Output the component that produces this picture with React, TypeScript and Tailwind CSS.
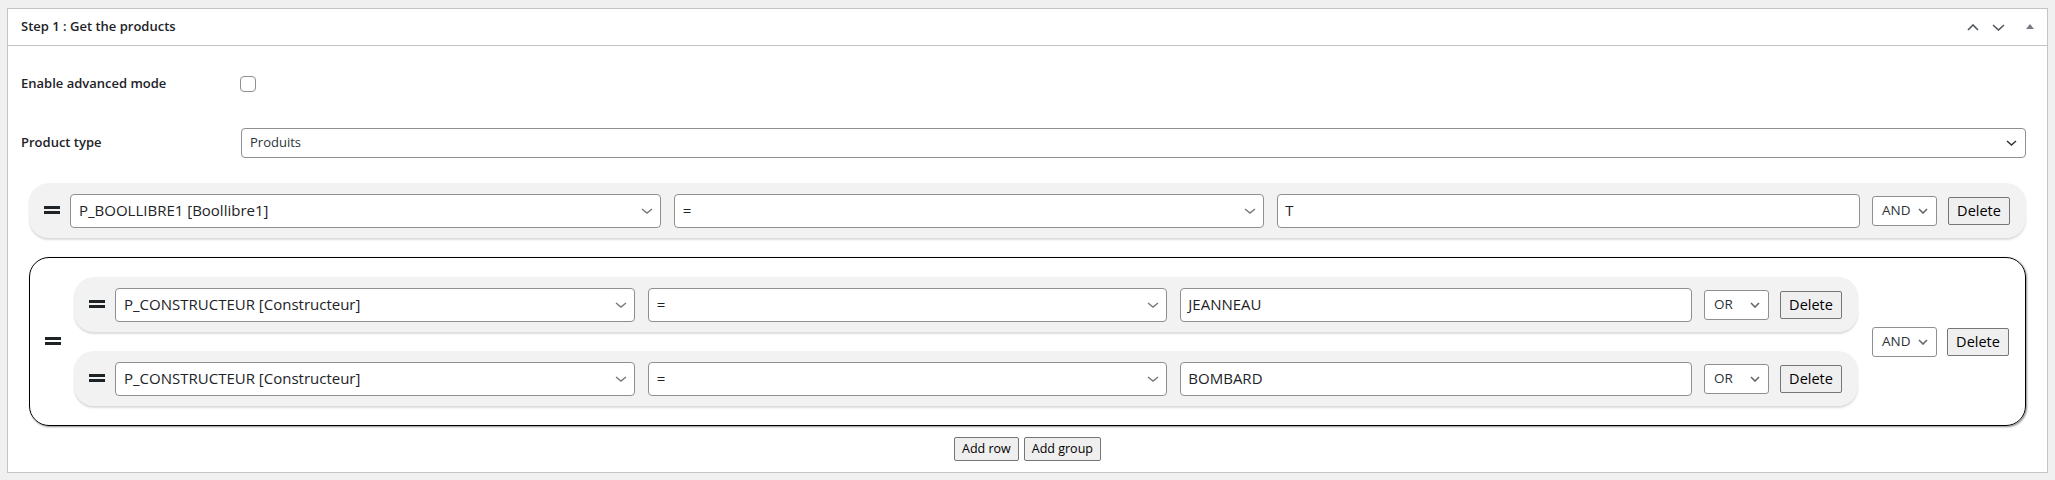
import React from 'react';

const Chevron: React.FC<{ w?: number; color?: string; sw?: number }> = ({ w = 10, color = '#6e6e6e', sw = 1.5 }) => (
  <svg width={w} height={6} viewBox={`0 0 ${w} 6`} className="shrink-0">
    <polyline points={`1,1 ${w / 2},5 ${w - 1},1`} fill="none" stroke={color} strokeWidth={sw} />
  </svg>
);

const Handle: React.FC = () => (
  <div className="w-4 shrink-0 flex flex-col gap-[2px] mb-[2px]">
    <div className="h-[3px] bg-[#1d2327]" />
    <div className="h-[3px] bg-[#1d2327]" />
  </div>
);

const FieldSelect: React.FC<{ text: string }> = ({ text }) => (
  <div className="flex-1 min-w-0 h-[34px] flex items-center justify-between pl-[8px] pr-[7px] bg-white border border-[#8f8f8f] rounded-[4px] text-[15px] text-[#1d2327]">
    <span className="truncate">{text}</span>
    <Chevron w={12} color="#777" sw={1.4} />
  </div>
);

const FieldInput: React.FC<{ value: string }> = ({ value }) => (
  <div className="flex-1 min-w-0 h-[34px] flex items-center pl-[7px] bg-white border border-[#8f8f8f] rounded-[4px] text-[15px] text-[#1d2327]">
    {value}
  </div>
);

const Logic: React.FC<{ text: string; className?: string }> = ({ text, className = '' }) => (
  <div className={`w-[65px] h-[30px] shrink-0 flex items-center justify-between pl-[9px] pr-[8px] bg-white border border-[#8c8f94] rounded-[3px] text-[13.5px] text-[#2c3338] ${className}`}>
    <span>{text}</span>
    <Chevron w={10} color="#666" sw={1.6} />
  </div>
);

const DeleteBtn: React.FC<{ className?: string }> = ({ className = '' }) => (
  <button className={`w-[62px] h-[28px] shrink-0 flex items-center justify-center bg-[#efefef] border border-[#767676] rounded-[2px] text-[14.5px] text-black ${className}`}>
    Delete
  </button>
);

const Rule: React.FC<{ field: string; value: string; logic: string }> = ({ field, value, logic }) => (
  <div className="h-[55px] flex items-center pl-[15px] pr-[16px] bg-[#f2f2f2] rounded-[20px] shadow-[0_2px_2px_rgba(0,0,0,0.14)]">
    <Handle />
    <div className="flex-1 min-w-0 flex gap-[13px] ml-[10px]">
      <FieldSelect text={field} />
      <FieldSelect text="=" />
      <FieldInput value={value} />
    </div>
    <Logic text={logic} className="ml-[12px]" />
    <DeleteBtn className="ml-[11px]" />
  </div>
);

export default function App() {
  return (
    <div className="min-h-screen bg-[#f0f0f1] pt-2 px-[7px] font-['Open_Sans',sans-serif]">
      <div className="bg-white border border-[#c3c4c7]">
        <div className="h-[37px] border-b border-[#c3c4c7] flex items-center justify-between pl-[13px] pr-[13px]">
          <h2 className="text-[13px] font-semibold text-[#1d2327]">Step 1 : Get the products</h2>
          <div className="flex items-center">
            <svg width="12" height="7" viewBox="0 0 12 7">
              <polyline points="1,6 6,1 11,6" fill="none" stroke="#50575e" strokeWidth="1.6" />
            </svg>
            <svg width="13" height="7" viewBox="0 0 13 7" className="ml-[13px]">
              <polyline points="1,1 6.5,6 12,1" fill="none" stroke="#50575e" strokeWidth="1.6" />
            </svg>
            <svg width="8" height="6" viewBox="0 0 8 6" className="ml-[21px]">
              <polygon points="0,5 4,0 8,5" fill="#787c82" />
            </svg>
          </div>
        </div>

        <div className="px-[13px]">
          <div className="h-[76px] flex items-center">
            <div className="w-[219px] text-[13px] font-semibold text-[#1d2327]">Enable advanced mode</div>
            <div className="w-4 h-4 bg-white border border-[#8c8f94] rounded-[4px]" />
          </div>
          <div className="h-[42px] flex items-center mr-[8px]">
            <div className="w-[220px] text-[13px] font-semibold text-[#1d2327]">Product type</div>
            <div className="flex-1 h-[30px] flex items-center justify-between pl-[8px] pr-[8px] bg-white border border-[#8c8f94] rounded-[4px] text-[13px] text-[#2c3338]">
              <span>Produits</span>
              <Chevron w={11} color="#2c3338" sw={1.4} />
            </div>
          </div>

          <div className="mx-[8px] mt-[19px]">
            <Rule field="P_BOOLLIBRE1 [Boollibre1]" value="T" logic="AND" />

            <div className="mt-[19px] flex items-center pl-[15px] pr-[16px] py-[19px] border border-black rounded-[20px] shadow-[1px_1px_2px_rgba(0,0,0,0.45)]">
              <Handle />
              <div className="flex-1 min-w-0 flex flex-col gap-[19px] ml-[13px]">
                <Rule field="P_CONSTRUCTEUR [Constructeur]" value="JEANNEAU" logic="OR" />
                <Rule field="P_CONSTRUCTEUR [Constructeur]" value="BOMBARD" logic="OR" />
              </div>
              <Logic text="AND" className="ml-[14px]" />
              <DeleteBtn className="ml-[10px]" />
            </div>
          </div>

          <div className="flex justify-center gap-[5px] mt-[11px] pb-[11px]">
            <button className="h-[24px] px-[7px] bg-[#efefef] border border-[#767676] rounded-[2px] text-[12.5px] text-black">Add row</button>
            <button className="h-[24px] px-[7px] bg-[#efefef] border border-[#767676] rounded-[2px] text-[12.5px] text-black">Add group</button>
          </div>
        </div>
      </div>
    </div>
  );
}
